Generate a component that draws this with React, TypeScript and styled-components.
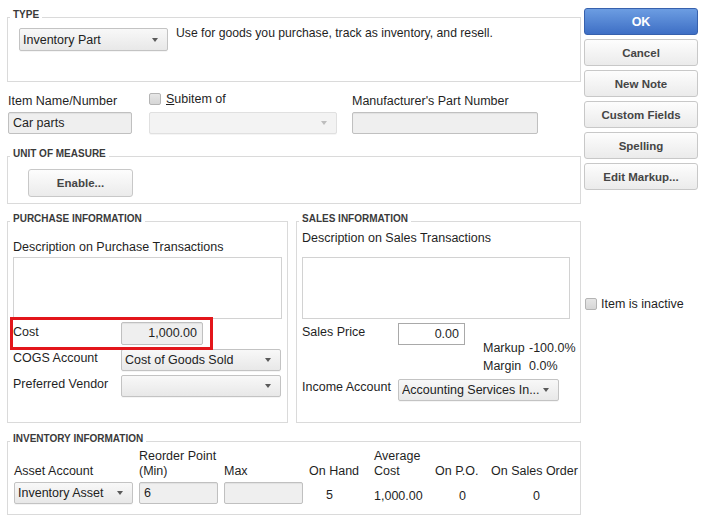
import React from 'react'
import styled, { createGlobalStyle, css } from 'styled-components'

const GlobalStyle = createGlobalStyle`
  html, body {
    margin: 0;
    padding: 0;
    background: #fff;
  }
  body {
    font-family: 'Liberation Sans', Arial, sans-serif;
    font-size: 12.5px;
    color: #1f1f1f;
  }
`

const Window = styled.div`
  display: flex;
  width: 703px;
  height: 525px;
  overflow: hidden;
`

const Main = styled.div`
  width: 574px;
  padding: 9px 0 0 7px;
`

const Side = styled.div`
  width: 114px;
  margin-left: 3px;
  padding-top: 8px;
  display: flex;
  flex-direction: column;
  gap: 4px;
`

const Section = styled.section<{ $top?: number; $width?: number }>`
  margin-top: ${p => p.$top ?? 0}px;
  width: ${p => (p.$width ? `${p.$width}px` : 'auto')};
`

const Caption = styled.div`
  position: relative;
  width: fit-content;
  height: 11px;
  line-height: 11px;
  margin: 0 0 -3px 3px;
  padding: 0 3px;
  background: #fff;
  font-size: 10px;
  font-weight: bold;
  color: #3a3a3a;
  text-transform: uppercase;
`

const Box = styled.div<{ $height: number; $pad?: string }>`
  box-sizing: border-box;
  height: ${p => p.$height}px;
  border: 1px solid #dadada;
  padding: ${p => p.$pad ?? '0'};
`

const TypeRow = styled.div`
  display: flex;
  align-items: flex-start;
  gap: 8px;
`

const Text = styled.div<{ $lift?: number; $size?: number }>`
  line-height: 14px;
  font-size: ${p => (p.$size ? `${p.$size}px` : 'inherit')};
  margin-top: ${p => -(p.$lift ?? 0)}px;
  white-space: nowrap;
`

const Row = styled.div<{ $top?: number; $gap?: number }>`
  display: flex;
  align-items: flex-start;
  gap: ${p => p.$gap ?? 0}px;
  margin-top: ${p => p.$top ?? 0}px;
`

const Column = styled.div<{ $left?: number }>`
  display: flex;
  flex-direction: column;
  margin-left: ${p => p.$left ?? 0}px;
`

const Label = styled.div<{ $raise?: number }>`
  display: flex;
  align-items: center;
  gap: 5px;
  height: 14px;
  line-height: 14px;
  white-space: nowrap;
  margin-top: ${p => -(p.$raise ?? 0)}px;
  margin-bottom: ${p => 4 + (p.$raise ?? 0)}px;
`

const RowLabel = styled.div<{ $width: number; $padTop?: number }>`
  width: ${p => p.$width}px;
  flex-shrink: 0;
  line-height: 14px;
  padding-top: ${p => p.$padTop ?? 2}px;
  white-space: nowrap;
`

const Select = styled.div<{ $w: number; $h?: number; $disabled?: boolean }>`
  box-sizing: border-box;
  display: flex;
  align-items: center;
  width: ${p => p.$w}px;
  height: ${p => p.$h ?? 22}px;
  padding: 0 9px 0 3px;
  border: 1px solid #c3c3c3;
  border-radius: 2px;
  background: linear-gradient(#f8f8f8, #e8e8e8);
  box-shadow: 0 1px 0 rgba(0, 0, 0, 0.04);
  color: #222;
  ${p =>
    p.$disabled &&
    css`
      border-color: #e0e0e0;
      background: #f3f3f3;
    `}
`

const SelectText = styled.span`
  flex: 1;
  overflow: hidden;
  white-space: nowrap;
`

const Caret = styled.span<{ $disabled?: boolean }>`
  flex-shrink: 0;
  width: 0;
  height: 0;
  margin-left: 4px;
  border-left: 3.5px solid transparent;
  border-right: 3.5px solid transparent;
  border-top: 4px solid ${p => (p.$disabled ? '#bdbdbd' : '#5a5a5a')};
`

const Input = styled.div<{ $w: number; $h?: number; $white?: boolean; $right?: boolean }>`
  box-sizing: border-box;
  width: ${p => p.$w}px;
  height: ${p => p.$h ?? 22}px;
  line-height: ${p => (p.$h ?? 22) - 2}px;
  padding: 0 5px 0 4px;
  border: 1px solid #c0c0c0;
  border-radius: 2px;
  background: #efefef;
  box-shadow: inset 0 1px 1px rgba(0, 0, 0, 0.06);
  text-align: ${p => (p.$right ? 'right' : 'left')};
  white-space: nowrap;
  ${p =>
    p.$white &&
    css`
      border-color: #a9a9a9;
      border-radius: 0;
      background: #fff;
      box-shadow: none;
    `}
`

const TextArea = styled.div<{ $w: number; $top: number }>`
  box-sizing: border-box;
  width: ${p => p.$w}px;
  height: 62px;
  margin-top: ${p => p.$top}px;
  border: 1px solid #d2d2d2;
  background: #fff;
`

const Check = styled.span`
  box-sizing: border-box;
  display: inline-block;
  width: 12px;
  height: 12px;
  border: 1px solid #b4b4b4;
  border-radius: 2px;
  background: linear-gradient(#e6e6e6, #d6d6d6);
`

const Button = styled.div<{ $primary?: boolean; $w?: number; $h?: number }>`
  box-sizing: border-box;
  display: flex;
  align-items: center;
  justify-content: center;
  width: ${p => p.$w ?? 114}px;
  height: ${p => p.$h ?? 27}px;
  border: 1px solid #c8c8c8;
  border-radius: 3px;
  background: linear-gradient(#fdfdfd, #ebebeb);
  font-weight: bold;
  font-size: 11.5px;
  color: #454545;
  ${p =>
    p.$primary &&
    css`
      border-color: #3761ad;
      background: linear-gradient(#6c9de2, #3e6fc5);
      color: #fff;
      font-size: 12.5px;
    `}
`

const InactiveRow = styled.div`
  display: flex;
  align-items: center;
  gap: 4px;
  margin: 103px 0 0 1px;
  line-height: 14px;
`

const CostRow = styled.div`
  position: relative;
  display: flex;
  align-items: flex-start;
  margin-top: 3px;
`

const Highlight = styled.div`
  position: absolute;
  left: -3px;
  top: -5px;
  width: 203px;
  height: 33px;
  box-sizing: border-box;
  border: 3px solid #e3161b;
  pointer-events: none;
`

const MarkupGrid = styled.div`
  display: grid;
  grid-template-columns: 46px auto;
  line-height: 18px;
  margin: -6px 0 0 181px;
`

const InvGrid = styled.div`
  display: grid;
  grid-template-columns: 119px 79px 79px 59px 55px 50px auto;
  column-gap: 6px;
  row-gap: 4px;
  align-items: end;
`

const Head = styled.div`
  line-height: 14.5px;
  white-space: nowrap;
`

const Value = styled.div<{ $left: number; $top?: number }>`
  align-self: start;
  padding: ${p => p.$top ?? 7}px 0 0 ${p => p.$left}px;
  line-height: 14px;
`

function Dropdown({ w, h, value, disabled }: { w: number; h?: number; value?: string; disabled?: boolean }) {
  return (
    <Select $w={w} $h={h} $disabled={disabled}>
      <SelectText>{value}</SelectText>
      <Caret $disabled={disabled} />
    </Select>
  )
}

const sideButtons = ['Cancel', 'New Note', 'Custom Fields']

export default function App() {
  return (
    <Window>
      <GlobalStyle />
      <Main>
        <Section>
          <Caption>Type</Caption>
          <Box $height={65} $pad="10px 0 0 11px">
            <TypeRow>
              <Dropdown w={149} h={23} value="Inventory Part" />
              <Text $lift={2} $size={12.2}>
                Use for goods you purchase, track as inventory, and resell.
              </Text>
            </TypeRow>
          </Box>
        </Section>

        <Row $top={12}>
          <Column $left={1}>
            <Label>Item Name/Number</Label>
            <Input $w={124}>Car parts</Input>
          </Column>
          <Column $left={17}>
            <Label $raise={2}>
              <Check />
              <span>
                <u>S</u>ubitem of
              </span>
            </Label>
            <Dropdown w={188} disabled />
          </Column>
          <Column $left={15}>
            <Label>Manufacturer's Part Number</Label>
            <Input $w={186} />
          </Column>
        </Row>

        <Section $top={14}>
          <Caption>Unit of Measure</Caption>
          <Box $height={48} $pad="12px 0 0 20px">
            <Button $w={105} $h={28}>
              Enable...
            </Button>
          </Box>
        </Section>

        <Row $top={9} $gap={8}>
          <Section $width={281}>
            <Caption>Purchase Information</Caption>
            <Box $height={202} $pad="18px 0 0 5px">
              <Text>Description on Purchase Transactions</Text>
              <TextArea $w={269} $top={3} />
              <CostRow>
                <Highlight />
                <RowLabel $width={108} $padTop={3}>
                  Cost
                </RowLabel>
                <Input $w={82} $h={23} $right>
                  1,000.00
                </Input>
              </CostRow>
              <Row $top={4}>
                <RowLabel $width={108}>COGS Account</RowLabel>
                <Dropdown w={160} value="Cost of Goods Sold" />
              </Row>
              <Row $top={4}>
                <RowLabel $width={108}>Preferred Vendor</RowLabel>
                <Dropdown w={160} />
              </Row>
            </Box>
          </Section>
          <Section $width={285}>
            <Caption>Sales Information</Caption>
            <Box $height={202} $pad="9px 0 0 5px">
              <Text>Description on Sales Transactions</Text>
              <TextArea $w={268} $top={12} />
              <Row $top={4}>
                <RowLabel $width={96} $padTop={2}>
                  Sales Price
                </RowLabel>
                <Input $w={67} $white $right>
                  0.00
                </Input>
              </Row>
              <MarkupGrid>
                <span>Markup</span>
                <span>-100.0%</span>
                <span>Margin</span>
                <span>0.0%</span>
              </MarkupGrid>
              <Row $top={4}>
                <RowLabel $width={96} $padTop={1}>
                  Income Account
                </RowLabel>
                <Dropdown w={161} value="Accounting Services In..." />
              </Row>
            </Box>
          </Section>
        </Row>

        <Section $top={10}>
          <Caption>Inventory Information</Caption>
          <Box $height={74} $pad="7px 0 0 6px">
            <InvGrid>
              <Head>Asset Account</Head>
              <Head>
                Reorder Point
                <br />
                (Min)
              </Head>
              <Head>Max</Head>
              <Head>On Hand</Head>
              <Head>
                Average
                <br />
                Cost
              </Head>
              <Head>On P.O.</Head>
              <Head>On Sales Order</Head>

              <Dropdown w={119} value="Inventory Asset" />
              <Input $w={79}>6</Input>
              <Input $w={79} />
              <Value $left={17} $top={6}>
                5
              </Value>
              <Value $left={0}>1,000.00</Value>
              <Value $left={24}>0</Value>
              <Value $left={42}>0</Value>
            </InvGrid>
          </Box>
        </Section>
      </Main>

      <Side>
        <Button $primary>OK</Button>
        {sideButtons.map(label => (
          <Button key={label}>{label}</Button>
        ))}
        <Button>
          <span>
            Spellin<u>g</u>
          </span>
        </Button>
        <Button>Edit Markup...</Button>
        <InactiveRow>
          <Check />
          <span>Item is inactive</span>
        </InactiveRow>
      </Side>
    </Window>
  )
}
